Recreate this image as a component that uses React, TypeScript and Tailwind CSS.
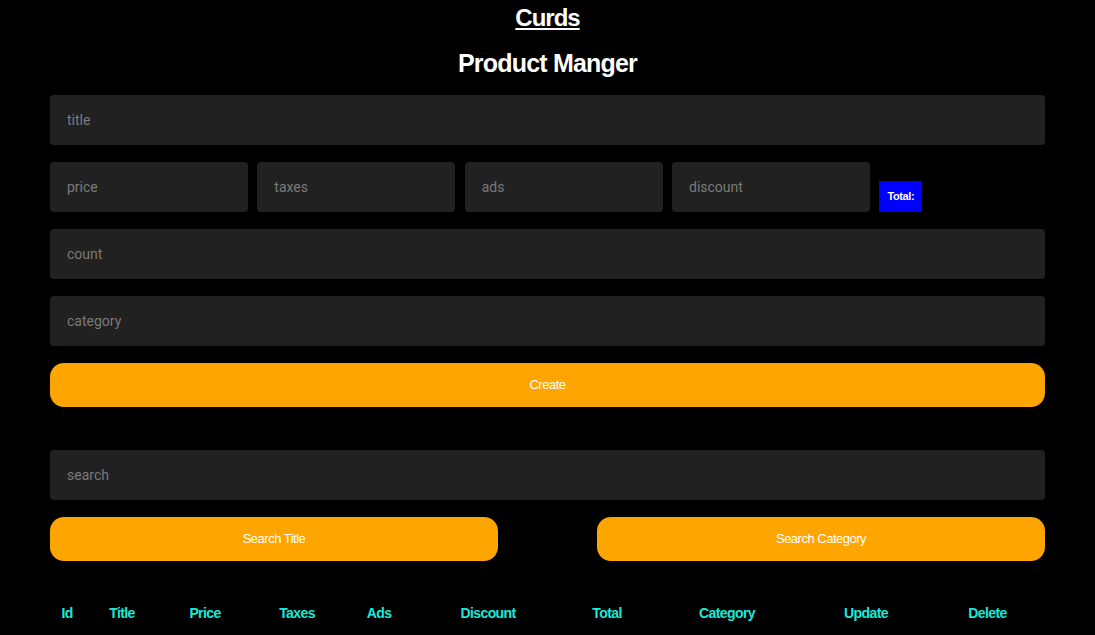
import React from 'react';

const heads = [
  { label: 'Id', w: 'w-[34px]' },
  { label: 'Title', w: 'w-[76px]' },
  { label: 'Price', w: 'w-[90px]' },
  { label: 'Taxes', w: 'w-[94px]' },
  { label: 'Ads', w: 'w-[70px]' },
  { label: 'Discount', w: 'w-[148px]' },
  { label: 'Total', w: 'w-[90px]' },
  { label: 'Category', w: 'w-[150px]' },
  { label: 'Update', w: 'w-[128px]' },
  { label: 'Delete', w: 'w-[115px]' },
];

const narrow = "font-['Liberation_Sans',Arial,sans-serif]";

function Field({ placeholder, className = '' }: { placeholder: string; className?: string }) {
  return (
    <input
      placeholder={placeholder}
      className={`h-[50px] rounded-[4px] bg-[#212121] px-[17px] text-[14px] text-white placeholder:text-[#7a7a7a] outline-none font-['Roboto',sans-serif] ${className}`}
    />
  );
}

export default function App() {
  return (
    <div className="min-h-screen bg-black text-white">
      <div className="w-[995px] ml-[50px]">
        <h2 className={`${narrow} text-center text-[24px] font-bold underline leading-none pt-[6px] tracking-[-1px]`}>Curds</h2>
        <h2 className={`${narrow} text-center text-[25px] font-bold leading-none mt-[21px] tracking-[-0.8px]`}>Product Manger</h2>

        <div className="flex flex-col mt-[19px]">
          <Field placeholder="title" />
          <div className="flex items-center gap-[9.33px] mt-[17px]">
            <Field placeholder="price" className="w-[198px]" />
            <Field placeholder="taxes" className="w-[198px]" />
            <Field placeholder="ads" className="w-[198px]" />
            <Field placeholder="discount" className="w-[198px]" />
            <div className={`${narrow} mt-[19px] h-[31px] w-[43px] flex items-center justify-center bg-[#0000ff] text-[11px] font-bold tracking-[-0.4px]`}>Total:</div>
          </div>
          <Field placeholder="count" className="mt-[17px]" />
          <Field placeholder="category" className="mt-[17px]" />
          <button className={`${narrow} mt-[17px] h-[44px] rounded-[14px] bg-[#ffa500] text-[13px] text-white tracking-[-0.5px]`}>Create</button>

          <Field placeholder="search" className="mt-[43px]" />
          <div className="flex justify-between mt-[17px]">
            <button className={`${narrow} w-[448px] h-[44px] rounded-[14px] bg-[#ffa500] text-[13px] text-white tracking-[-0.5px]`}>Search Title</button>
            <button className={`${narrow} w-[448px] h-[44px] rounded-[14px] bg-[#ffa500] text-[13px] text-white tracking-[-0.5px]`}>Search Category</button>
          </div>
        </div>

        <div className={`${narrow} flex mt-[42px] text-[14px] font-bold text-[#1ce8d8] tracking-[-0.6px]`}>
          {heads.map((h) => (
            <div key={h.label} className={`${h.w} text-center`}>{h.label}</div>
          ))}
        </div>
      </div>
    </div>
  );
}
